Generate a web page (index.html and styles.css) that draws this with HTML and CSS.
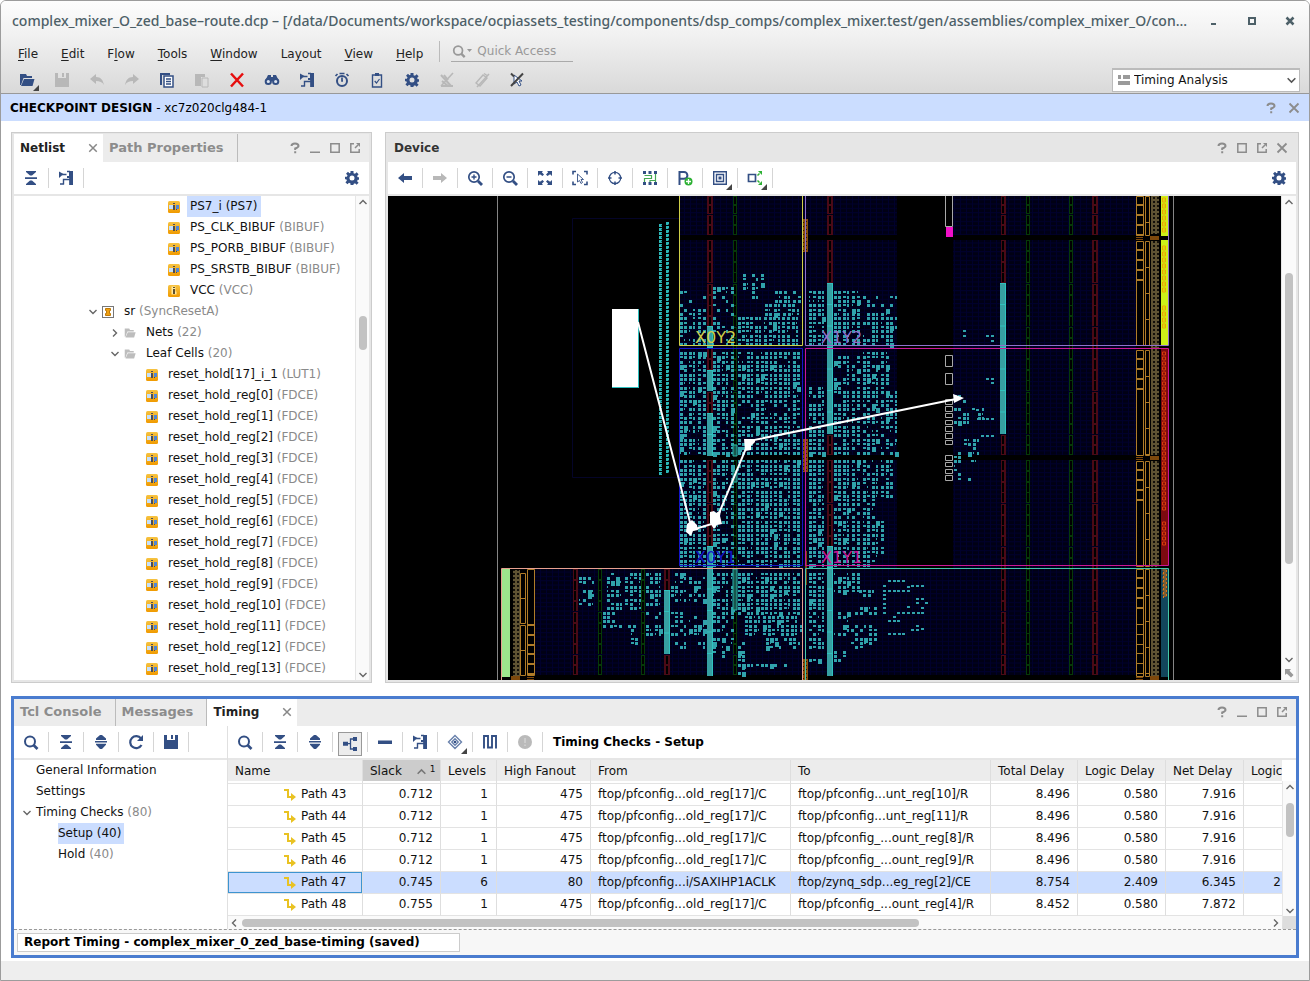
FILE: index.html
```html
<!DOCTYPE html>
<html lang="en">
<head>
<meta charset="utf-8">
<title>complex_mixer_0_zed_base-route.dcp</title>
<link rel="stylesheet" href="styles.css">
</head>
<body>
<svg class="defs" aria-hidden="true">
  <defs>
    <symbol id="search" viewBox="0 0 16 16"><circle cx="7" cy="7.500" r="5" fill="none" stroke="currentColor" stroke-width="2"/><path d="M10.500 11l4 4" stroke="currentColor" stroke-width="2.600"/></symbol>
    <symbol id="collapse" viewBox="0 0 16 16"><path d="M3 1h10v1L9 5.500H7L3 2zM2 7.200h12v1.800H2zM7 10.500h2l4 3.500v1H3v-1z" fill="currentColor"/></symbol>
    <symbol id="expand" viewBox="0 0 16 16"><path d="M7 1h2l4 3.500V6H3V4.500zM2 7h12v1.500H2zM3 9.700h10v1L9 15H7L3 10.700z" fill="currentColor"/></symbol>
    <symbol id="goto" viewBox="0 0 16 16"><path d="M1 1.500L5.500 4 1 8z" fill="currentColor"/><path d="M4 4.500h4.500M12 1v14M9 1.500h3M5.500 14.500V9.500H12M2 14h4" fill="none" stroke="currentColor" stroke-width="1.400"/><path d="M11 1h4v14h-3.500V8H9V6h2z" fill="currentColor"/></symbol>
    <symbol id="gear" viewBox="0 0 16 16"><path d="M6.500 1h3v2.200l1.500.6 1.600-1.500 2 2L13.100 6l.6 1.300H15v2.400h-1.300l-.6 1.500 1.500 1.500-2 2-1.600-1.400-1.500.6V15h-3v-1.600l-1.500-.6-1.600 1.400-2-2 1.500-1.500-.6-1.500H1V6.800h1.900L3.500 5.300 2 3.800l2-2 1.500 1.500 1-.5zM8 5.500A2.500 2.500 0 108 10.500 2.500 2.500 0 108 5.500z" fill="currentColor" fill-rule="evenodd"/></symbol>
    <symbol id="folder" viewBox="0 0 16 16"><path d="M1 13V2h6l1 2h5v2H4.500L2 13z" fill="currentColor"/><path d="M5 7h10.500L13.500 14H2z" fill="currentColor"/></symbol>
    <symbol id="floppy" viewBox="0 0 16 16"><path d="M1 1h3v5h8V1h3v14H1zM8 1h2v4H8z" fill="currentColor"/></symbol>
    <symbol id="undo" viewBox="0 0 16 16"><path d="M1 7l6-5v3c5 0 7 3 8 8-2-3-4-4-8-4v3z" fill="currentColor"/></symbol>
    <symbol id="redo" viewBox="0 0 16 16"><path d="M15 7L9 2v3c-5 0-7 3-8 8 2-3 4-4 8-4v3z" fill="currentColor"/></symbol>
    <symbol id="copy" viewBox="0 0 16 16"><path d="M1 1h10v2H3v10H1z" fill="currentColor"/><path d="M5 4h9v11H5zM7 7h5M7 9.500h5M7 12h5" fill="#fff" stroke="currentColor" stroke-width="1.500"/></symbol>
    <symbol id="paste" viewBox="0 0 16 16"><path d="M1 2h10v3H7v9H1z" fill="currentColor"/><path d="M8 6h6v9H8z" fill="#ddd" stroke="currentColor"/></symbol>
    <symbol id="cross" viewBox="0 0 16 16"><path d="M2 1.500l12 13M14 1.500l-12 13" stroke="currentColor" stroke-width="2.500"/></symbol>
    <symbol id="binoc" viewBox="0 0 16 16"><path d="M4 3h3v2h2V3h3l3 6H1z" fill="currentColor"/><g fill="#dce4f0" stroke="currentColor" stroke-width="2"><circle cx="4.300" cy="9.500" r="2.600"/><circle cx="11.700" cy="9.500" r="2.600"/></g></symbol>
    <symbol id="clock" viewBox="0 0 16 16"><circle cx="8" cy="9" r="5" fill="none" stroke="currentColor" stroke-width="2"/><path d="M8 5.500V9h1M5.500 1.500h5M1.500 4l2-2M14.500 4l-2-2" stroke="currentColor" stroke-width="1.700" fill="none"/></symbol>
    <symbol id="clip" viewBox="0 0 16 16"><path d="M3.500 3h9v12h-9z" fill="none" stroke="currentColor" stroke-width="1.400"/><path d="M6 1h4v3H6z" fill="currentColor"/><path d="M5.700 9l1.800 2 3-4" fill="none" stroke="currentColor" stroke-width="1.200"/></symbol>
    <symbol id="nomark" viewBox="0 0 16 16"><path d="M2 3l10 11M2 14h12M5 3l4 5M3 9l6 5" stroke="currentColor" stroke-width="2"/><path d="M14 1L2 14" stroke="currentColor" stroke-width="1.600"/></symbol>
    <symbol id="erase" viewBox="0 0 16 16"><path d="M2 11L9 3l4 3-7 8zM10 1.500l3 2" fill="none" stroke="currentColor" stroke-width="1.400"/><path d="M15 2L3 15" stroke="currentColor" stroke-width="1.500"/></symbol>
    <symbol id="noselect" viewBox="0 0 16 16"><path d="M5 3v9l3-2 2 4 2-1-2-4h3z" fill="#fff" stroke="#334f84"/><path d="M2 1.500l3 3M14 1.500L2 14" stroke="currentColor" stroke-width="2"/></symbol>
    <symbol id="left" viewBox="0 0 16 16"><path d="M1 8l6-5v3h8v4H7v3z" fill="currentColor"/></symbol>
    <symbol id="right" viewBox="0 0 16 16"><path d="M15 8L9 3v3H1v4h8v3z" fill="currentColor"/></symbol>
    <symbol id="zoomin" viewBox="0 0 16 16"><circle cx="7" cy="7" r="5.200" fill="none" stroke="currentColor" stroke-width="1.700"/><path d="M11 11l4 4" stroke="currentColor" stroke-width="2.800"/><path d="M4.500 7h5M7 4.500v5" stroke="currentColor" stroke-width="1.400"/></symbol>
    <symbol id="zoomout" viewBox="0 0 16 16"><circle cx="7" cy="7" r="5.200" fill="none" stroke="currentColor" stroke-width="1.700"/><path d="M11 11l4 4" stroke="currentColor" stroke-width="2.800"/><path d="M4.500 7h5" stroke="currentColor" stroke-width="1.400"/></symbol>
    <symbol id="fit" viewBox="0 0 16 16"><path d="M1 1h5L4.800 2.300 7 4.500 5.500 6 2.900 4.200 1 6zM15 1v5l-1.900-1.800L10.500 6 9 4.500l2.200-2.200L10 1zM1 15v-5l1.900 1.800L5.500 10 7 11.500l-2.200 2.200L6 15zM15 15h-5l1.200-1.300L9 11.500l1.500-1.500 2.600 1.800L15 10z" fill="currentColor"/></symbol>
    <symbol id="fitsel" viewBox="0 0 16 16"><path d="M1 4.500V1.500h3M12 1.500h3v3M1 11.500v3h3M12 14.500h3v-3" fill="none" stroke="currentColor" stroke-width="1.600"/><path d="M5.500 4v8l2-1.500 1.500 3 1.500-1-1.500-3h2.500z" fill="none" stroke="currentColor" stroke-width=".9"/></symbol>
    <symbol id="target" viewBox="0 0 16 16"><circle cx="8" cy="8" r="5.700" fill="none" stroke="currentColor" stroke-width="1.200"/><path d="M8 1v3.500M8 11.500v3.500M1 8h3.500M11.500 8h3.500" stroke="currentColor" stroke-width="1.600"/></symbol>
    <symbol id="routing" viewBox="0 0 16 16"><path d="M1 1h3v3H1zM6.500 1h3v3h-3zM12 1h3v3h-3zM1 12h3v3H1zM6.500 12h3v3h-3zM12 12h3v3h-3z" fill="#334f84"/><path d="M2.500 5.500h7v3h-7v3.500M13.500 4v8M8 12v-1.500h5" fill="none" stroke="#45a853" stroke-width="1.200"/></symbol>
    <symbol id="pblock" viewBox="0 0 16 16"><path d="M2.500 15V2h4.500a3.200 3.200 0 010 6.800H3" fill="none" stroke="#334f84" stroke-width="2"/><circle cx="11.500" cy="11.500" r="4" fill="#2eb135"/><path d="M9 11.500h5M11.500 9v5" stroke="#fff" stroke-width="1.300"/></symbol>
    <symbol id="layers" viewBox="0 0 16 16"><path d="M1.700 1.700h12.600v12.600H1.700zM4.500 4.500h7v7h-7z" fill="none" stroke="currentColor" stroke-width="1.400"/><path d="M6.500 6.500h3v3h-3z" fill="currentColor"/></symbol>
    <symbol id="fanout" viewBox="0 0 16 16"><path d="M1.500 4.500h7v7h-7z" fill="none" stroke="#334f84" stroke-width="1.700"/><path d="M10.500 5.500l2-2M10.500 10.500l2 2" fill="none" stroke="#2eb135" stroke-width="1.500"/><path d="M11 1h4v4zM11 15h4v-4z" fill="#2eb135"/></symbol>
    <symbol id="reload" viewBox="0 0 16 16"><path d="M13 4.500A6 6 0 1013.500 11" fill="none" stroke="currentColor" stroke-width="2.200"/><path d="M15 1v6H9z" fill="currentColor"/></symbol>
    <symbol id="hier" viewBox="0 0 16 16"><path d="M1 5.700h5v4H1zM11 1h4v4h-4zM11 11h4v4h-4z" fill="currentColor"/><path d="M6 7.700h2.500M11 3H8.500v10H11" fill="none" stroke="currentColor" stroke-width="1.300"/></symbol>
    <symbol id="minus" viewBox="0 0 16 16"><path d="M1 6.500h14v3.500H1z" fill="currentColor"/></symbol>
    <symbol id="diamond" viewBox="0 0 16 16"><path d="M8 1.500L14.500 8 8 14.500 1.500 8zM8 4.800L11.200 8 8 11.200 4.800 8z" fill="none" stroke="#6880ab" stroke-width="1.400"/><circle cx="8" cy="8" r="1.300" fill="#334f84"/></symbol>
    <symbol id="wave" viewBox="0 0 16 16"><path d="M2 14.500V2h4v11.500h4V2h4v12.500" fill="none" stroke="currentColor" stroke-width="1.900"/></symbol>
    <symbol id="info" viewBox="0 0 16 16"><circle cx="8" cy="8" r="7" fill="#bababa"/><path d="M8 4v5M8 10.500v1.500" stroke="#d0d0d0" stroke-width="1.700"/></symbol>
    <symbol id="help" viewBox="0 0 12 12"><path d="M2.500 4Q2.500 1.500 6 1.500T9.500 4Q9.500 5.200 6.200 6.500V8M6.200 9.300v2" fill="none" stroke="currentColor" stroke-width="2"/></symbol>
    <symbol id="min" viewBox="0 0 12 12"><path d="M1 9.500h10v1.500H1z" fill="currentColor"/></symbol>
    <symbol id="max" viewBox="0 0 12 12"><path d="M1.800 1.800h8.400v8.400H1.800z" fill="none" stroke="currentColor" stroke-width="1.500"/></symbol>
    <symbol id="float" viewBox="0 0 12 12"><path d="M5 1.800H1.800v8.400h8.400V7M6 6l3-3" fill="none" stroke="currentColor" stroke-width="1.500"/><path d="M7 1h4v4z" fill="currentColor"/></symbol>
    <symbol id="close" viewBox="0 0 12 12"><path d="M1.500 1.500l9 9M10.500 1.500l-9 9" stroke="currentColor" stroke-width="1.800"/></symbol>
    <symbol id="up" viewBox="0 0 10 10"><path d="M1.500 7L5 3.500 8.500 7" fill="none" stroke="currentColor" stroke-width="1.400"/></symbol>
    <symbol id="down" viewBox="0 0 10 10"><path d="M1.500 3L5 6.500 8.500 3" fill="none" stroke="currentColor" stroke-width="1.400"/></symbol>
    <symbol id="prev" viewBox="0 0 10 10"><path d="M7 1.500L3.500 5 7 8.500" fill="none" stroke="currentColor" stroke-width="1.400"/></symbol>
    <symbol id="next" viewBox="0 0 10 10"><path d="M3 1.500L6.500 5 3 8.500" fill="none" stroke="currentColor" stroke-width="1.400"/></symbol>
    <linearGradient id="gold" x2="0" y2="1"><stop offset="0" stop-color="#f6c342"/><stop offset="1" stop-color="#f09a00"/></linearGradient>
    <symbol id="cell" viewBox="0 0 12 12"><rect width="12" height="12" rx="1.500" fill="url(#gold)"/><path d="M1 4h4v4H1z" fill="#c4e0fc"/><path d="M8 4h3v4H8z" fill="#4f86d6"/><path d="M5 4h2v5H5zM5 2h2v1H5zM8 8h1v1H8z" fill="#4a4c58"/></symbol>
    <symbol id="cellv" viewBox="0 0 12 12"><rect width="12" height="12" rx="1.500" fill="url(#gold)"/><path d="M3.500 1.500h4v5h1v3h-5z" fill="#ffe9a0"/><path d="M5 4h2v5H5zM5 2h2v1H5z" fill="#5c5030"/></symbol>
    <symbol id="inst" viewBox="0 0 12 12"><rect x=".5" y=".5" width="11" height="11" fill="#fff" stroke="#777"/><path d="M3.500 2.500h5v2h-1v3h1v2h-5v-2h1v-3h-1z" fill="#f0a010" stroke="#c07a08"/></symbol>
    <symbol id="path" viewBox="0 0 13 13"><path d="M1 2h4v7h6" fill="none" stroke="#e9c222" stroke-width="2"/><path d="M8 5l5 4-5 4z" fill="#e9c222"/></symbol>
    <symbol id="layout" viewBox="0 0 12 12"><path d="M0 1h3v4H0zM5 1h7v4H5zM0 7h12v4H0z" fill="#9a9a9a"/></symbol>
  </defs>
</svg>
<div class="window">
  <header class="chrome">
    <div class="titlebar">
      <h1>complex_mixer_O_zed_base–route.dcp – [/data/Documents/workspace/ocpiassets_testing/components/dsp_comps/complex_mixer.test/gen/assemblies/complex_mixer_O/con...</h1>
      <div class="winbtns">
        <button aria-label="Minimize"><svg viewBox="0 0 10 10"><path d="M2 7h5v2H2z" fill="currentColor"/></svg></button>
        <button aria-label="Maximize"><svg viewBox="0 0 10 10"><path d="M2 2h6v6H2z" fill="none" stroke="currentColor" stroke-width="2"/></svg></button>
        <button aria-label="Close window"><svg viewBox="0 0 10 10"><path d="M1.500 1.500l7 7M8.500 1.500l-7 7" stroke="currentColor" stroke-width="2.500"/></svg></button>
      </div>
    </div>
    <nav class="menubar">
      <button><u>F</u>ile</button><button><u>E</u>dit</button><button>F<u>l</u>ow</button><button><u>T</u>ools</button><button><u>W</u>indow</button><button>La<u>y</u>out</button><button><u>V</u>iew</button><button><u>H</u>elp</button>
      <label class="quick"><svg class="i16"><use href="#search"/></svg><svg class="caret" viewBox="0 0 6 4"><path d="M0 0h5L2.500 3z" fill="currentColor"/></svg><input type="text" placeholder="Quick Access" aria-label="Quick Access"></label>
    </nav>
    <div class="maintools">
      <div class="tools">
        <button class="more" aria-label="Open"><svg><use href="#folder"/></svg></button>
        <button class="off" aria-label="Save"><svg><use href="#floppy"/></svg></button>
        <button class="off" aria-label="Undo"><svg><use href="#undo"/></svg></button>
        <button class="off" aria-label="Redo"><svg><use href="#redo"/></svg></button>
        <button aria-label="Copy"><svg><use href="#copy"/></svg></button>
        <button class="off" aria-label="Paste"><svg><use href="#paste"/></svg></button>
        <button class="red" aria-label="Delete"><svg><use href="#cross"/></svg></button>
        <button aria-label="Find"><svg><use href="#binoc"/></svg></button>
        <button aria-label="Go to"><svg><use href="#goto"/></svg></button>
        <button aria-label="Timing"><svg><use href="#clock"/></svg></button>
        <button aria-label="Report"><svg><use href="#clip"/></svg></button>
        <button aria-label="Settings"><svg><use href="#gear"/></svg></button>
        <button class="off" aria-label="Unmark"><svg><use href="#nomark"/></svg></button>
        <button class="off" aria-label="Unhighlight"><svg><use href="#erase"/></svg></button>
        <button class="dark" aria-label="Unselect"><svg><use href="#noselect"/></svg></button>
      </div>
      <label class="layoutsel"><svg><use href="#layout"/></svg><select aria-label="Layout"><option>Timing Analysis</option></select><svg class="arr"><use href="#down"/></svg></label>
    </div>
  </header>
  <div class="design"><strong>CHECKPOINT DESIGN</strong><span>- xc7z020clg484-1</span>
    <div class="ctl"><button aria-label="Help"><svg><use href="#help"/></svg></button><button aria-label="Close"><svg><use href="#close"/></svg></button></div>
  </div>
  <main>
    <div class="top">
      <section class="panel netlist">
        <div class="tabs">
          <div class="tab on"><span>Netlist</span><button aria-label="Close tab"><svg><use href="#close"/></svg></button></div>
          <div class="tab"><span>Path Properties</span></div>
          <div class="ctl"><button aria-label="Help"><svg><use href="#help"/></svg></button><button aria-label="Minimize"><svg><use href="#min"/></svg></button><button aria-label="Maximize"><svg><use href="#max"/></svg></button><button aria-label="Float"><svg><use href="#float"/></svg></button></div>
        </div>
        <div class="tools">
          <button aria-label="Collapse All"><svg><use href="#collapse"/></svg></button><button aria-label="Go to"><svg><use href="#goto"/></svg></button><button class="end" aria-label="Settings"><svg><use href="#gear"/></svg></button>
        </div>
        <div class="scroller">
          <ul class="tree">
            <li class="l4"><i></i><svg><use href="#cell"/></svg><span class="sel">PS7_i (PS7)</span></li>
            <li class="l4"><i></i><svg><use href="#cell"/></svg><span>PS_CLK_BIBUF <em>(BIBUF)</em></span></li>
            <li class="l4"><i></i><svg><use href="#cell"/></svg><span>PS_PORB_BIBUF <em>(BIBUF)</em></span></li>
            <li class="l4"><i></i><svg><use href="#cell"/></svg><span>PS_SRSTB_BIBUF <em>(BIBUF)</em></span></li>
            <li class="l4"><i></i><svg><use href="#cellv"/></svg><span>VCC <em>(VCC)</em></span></li>
            <li class="l1"><i><svg><use href="#down"/></svg></i><svg><use href="#inst"/></svg><span>sr <em>(SyncResetA)</em></span></li>
            <li class="l2"><i><svg><use href="#next"/></svg></i><svg class="fold"><use href="#folder"/></svg><span>Nets <em>(22)</em></span></li>
            <li class="l2"><i><svg><use href="#down"/></svg></i><svg class="fold"><use href="#folder"/></svg><span>Leaf Cells <em>(20)</em></span></li>
            <li class="l3"><i></i><svg><use href="#cell"/></svg><span>reset_hold[17]_i_1 <em>(LUT1)</em></span></li>
            <li class="l3"><i></i><svg><use href="#cell"/></svg><span>reset_hold_reg[0] <em>(FDCE)</em></span></li>
            <li class="l3"><i></i><svg><use href="#cell"/></svg><span>reset_hold_reg[1] <em>(FDCE)</em></span></li>
            <li class="l3"><i></i><svg><use href="#cell"/></svg><span>reset_hold_reg[2] <em>(FDCE)</em></span></li>
            <li class="l3"><i></i><svg><use href="#cell"/></svg><span>reset_hold_reg[3] <em>(FDCE)</em></span></li>
            <li class="l3"><i></i><svg><use href="#cell"/></svg><span>reset_hold_reg[4] <em>(FDCE)</em></span></li>
            <li class="l3"><i></i><svg><use href="#cell"/></svg><span>reset_hold_reg[5] <em>(FDCE)</em></span></li>
            <li class="l3"><i></i><svg><use href="#cell"/></svg><span>reset_hold_reg[6] <em>(FDCE)</em></span></li>
            <li class="l3"><i></i><svg><use href="#cell"/></svg><span>reset_hold_reg[7] <em>(FDCE)</em></span></li>
            <li class="l3"><i></i><svg><use href="#cell"/></svg><span>reset_hold_reg[8] <em>(FDCE)</em></span></li>
            <li class="l3"><i></i><svg><use href="#cell"/></svg><span>reset_hold_reg[9] <em>(FDCE)</em></span></li>
            <li class="l3"><i></i><svg><use href="#cell"/></svg><span>reset_hold_reg[10] <em>(FDCE)</em></span></li>
            <li class="l3"><i></i><svg><use href="#cell"/></svg><span>reset_hold_reg[11] <em>(FDCE)</em></span></li>
            <li class="l3"><i></i><svg><use href="#cell"/></svg><span>reset_hold_reg[12] <em>(FDCE)</em></span></li>
            <li class="l3"><i></i><svg><use href="#cell"/></svg><span>reset_hold_reg[13] <em>(FDCE)</em></span></li>
          </ul>
          <div class="vbar nbar"><svg><use href="#up"/></svg><b></b><svg><use href="#down"/></svg></div>
        </div>
      </section>
      <section class="panel device">
        <div class="tabs devhead"><h2>Device</h2>
          <div class="ctl"><button aria-label="Help"><svg><use href="#help"/></svg></button><button aria-label="Maximize"><svg><use href="#max"/></svg></button><button aria-label="Float"><svg><use href="#float"/></svg></button><button aria-label="Close"><svg><use href="#close"/></svg></button></div>
        </div>
        <div class="tools">
          <button aria-label="Previous"><svg><use href="#left"/></svg></button><button class="off" aria-label="Next"><svg><use href="#right"/></svg></button><button aria-label="Zoom In"><svg><use href="#zoomin"/></svg></button><button aria-label="Zoom Out"><svg><use href="#zoomout"/></svg></button><button aria-label="Zoom Fit"><svg><use href="#fit"/></svg></button><button aria-label="Fit Selection"><svg><use href="#fitsel"/></svg></button><button aria-label="Autofit"><svg><use href="#target"/></svg></button><button aria-label="Routing Resources"><svg><use href="#routing"/></svg></button><button aria-label="Draw Pblock"><svg><use href="#pblock"/></svg></button><button class="more" aria-label="Layers"><svg><use href="#layers"/></svg></button><button class="more" aria-label="Cell Connections"><svg><use href="#fanout"/></svg></button><button class="end" aria-label="Settings"><svg><use href="#gear"/></svg></button>
        </div>
        <div class="scroller">
          <svg class="chip" viewBox="388 196 893 484" preserveAspectRatio="xMidYMin slice" role="img" aria-label="Device floorplan">
            <defs><pattern id="grid" width="6" height="4.330" patternUnits="userSpaceOnUse"><rect width="6" height="4.330" fill="#000014"/><path d="M0 .5h6M.5 0v4.330" stroke="#00002c"/></pattern>
            <pattern id="pads" width="4" height="4" patternUnits="userSpaceOnUse"><rect width="4" height="4" fill="#5f5333"/><path d="M1 1h2v2H1z" fill="#14100a"/></pattern>
            <pattern id="pins" width="5" height="4" patternUnits="userSpaceOnUse"><rect width="5" height="4" fill="#8a4f0c"/><path d="M1 1h1v1H1zM3 2h1v1H3z" fill="#2a1500"/></pattern></defs>
            <rect x="388" y="196" width="893" height="484" fill="#000"/>
            <path d="M679 196h218v39H679zM953 196h183v39H953zM679 240h218v215H679zM953 240h183v215H953zM679 460h218v108H679zM953 460h183v108H953zM535 568h601v107H535z" fill="url(#grid)"/>
            <path d="M679 218.500H572.500V477.500H679" fill="none" stroke="#040428"/>
            <g id="fabric"></g>
            <g fill="none">
              <path d="M497.500 196v484M1173.500 196v484" stroke="#858585"/>
              <path d="M679.500 196v149.500h123V196" stroke="#d0d048"/>
              <path d="M805.500 196v149.500h363V196" stroke="#9070cc"/>
              <path d="M679.500 566V348.500h123v217h-123" stroke="#1515c8"/>
              <path d="M805.500 348.500h363v217h-363z" stroke="#cc1596"/>
              <path d="M501.500 680V568.500h301V680" stroke="#e8a090"/>
              <path d="M805.500 680V568.500h363V680" stroke="#45c8a8"/>
              <path d="M945.500 196v30.500h7V196M945.500 355.500h7v11h-7zM945.500 373.500h7v11h-7zM945.500 399.500h7v5h-7zM945.500 406.500h7v5h-7zM945.500 413.500h7v4h-7zM945.500 420.500h7v4h-7zM945.500 426.500h7v5h-7zM945.500 433.500h7v5h-7zM945.500 440.500h7v4h-7zM945.500 455.500h7v5h-7zM945.500 462.500h7v4h-7zM945.500 469.500h7v4h-7zM945.500 475.500h7v5h-7z" stroke="#a8a8a8"/>
            </g>
            <path d="M946 227h7v10h-7z" fill="#f010c8"/>
            <g class="region"><text x="695" y="343" fill="#d0d048">X0Y2</text><text x="821" y="343" fill="#9070cc">X1Y2</text><text x="695" y="563" fill="#1515c8">X0Y1</text><text x="821" y="563" fill="#cc1596">X1Y1</text></g>
            <path d="M612 309h27v79h-27z" fill="#2ec0c0"/><path d="M612 309h26v78h-26z" fill="#fff"/>
            <path d="M638 322l54 208 23-7 34-82 212-43" fill="none" stroke="#fff" stroke-width="2"/>
            <path d="M687 524l5-4 5 5 1 5-5 1-2 5-5-4zM710 512l4-1 2 2 5-3-1 6 2 8-5 1-3 4-4-6zM744 439h11v3l-4 4v4l-6 1zM953 394l11 4-10 5z" fill="#fff"/>
          </svg>
          <div class="vbar dbar"><svg><use href="#up"/></svg><b></b><svg><use href="#down"/></svg><svg class="corner" viewBox="0 0 10 10"><path d="M1 1h6L5.500 2.700 9.500 7 7 9.500 2.700 5.500 1 7z" fill="#999"/></svg></div>
        </div>
      </section>
    </div>
    <section class="panel timing">
      <div class="tabs">
        <div class="tab"><span>Tcl Console</span></div><div class="tab"><span>Messages</span></div><div class="tab on"><span>Timing</span><button aria-label="Close tab"><svg><use href="#close"/></svg></button></div>
        <div class="ctl"><button aria-label="Help"><svg><use href="#help"/></svg></button><button aria-label="Minimize"><svg><use href="#min"/></svg></button><button aria-label="Maximize"><svg><use href="#max"/></svg></button><button aria-label="Float"><svg><use href="#float"/></svg></button></div>
      </div>
      <div class="split">
        <div class="reports">
          <div class="tools"><button aria-label="Search"><svg><use href="#search"/></svg></button><button aria-label="Collapse All"><svg><use href="#collapse"/></svg></button><button aria-label="Expand All"><svg><use href="#expand"/></svg></button><button aria-label="Rerun"><svg><use href="#reload"/></svg></button><button aria-label="Save"><svg><use href="#floppy"/></svg></button></div>
          <ul class="tree rep">
            <li><i></i><span>General Information</span></li>
            <li><i></i><span>Settings</span></li>
            <li><i><svg><use href="#down"/></svg></i><span>Timing Checks <em>(80)</em></span></li>
            <li class="sub"><i></i><span class="sel">Setup (40)</span></li>
            <li class="sub"><i></i><span>Hold <em>(40)</em></span></li>
          </ul>
        </div>
        <div class="results">
          <div class="tools"><button aria-label="Search"><svg><use href="#search"/></svg></button><button aria-label="Collapse All"><svg><use href="#collapse"/></svg></button><button aria-label="Expand All"><svg><use href="#expand"/></svg></button><button class="pressed" aria-label="Group by hierarchy"><svg><use href="#hier"/></svg></button><button aria-label="Flatten"><svg><use href="#minus"/></svg></button><button aria-label="Go to"><svg><use href="#goto"/></svg></button><button class="more" aria-label="Mark"><svg><use href="#diamond"/></svg></button><button aria-label="Waveform"><svg><use href="#wave"/></svg></button><button aria-label="Messages"><svg><use href="#info"/></svg></button><h3>Timing Checks - Setup</h3></div>
          <div class="gridwrap">
            <div class="tablebox">
              <table>
                <colgroup><col class="c1"><col class="c2"><col class="c3"><col class="c4"><col><col><col class="c7"><col class="c8"><col class="c9"><col class="c10"></colgroup>
                <thead><tr><th>Name</th><th class="sorted">Slack<svg><use href="#up"/></svg><sup>1</sup></th><th>Levels</th><th>High Fanout</th><th>From</th><th>To</th><th>Total Delay</th><th>Logic Delay</th><th>Net Delay</th><th>Logic</th></tr></thead>
                <tbody>
                  <tr><td><svg><use href="#path"/></svg>Path 43</td><td>0.712</td><td>1</td><td>475</td><td>ftop/pfconfig...old_reg[17]/C</td><td>ftop/pfconfig...unt_reg[10]/R</td><td>8.496</td><td>0.580</td><td>7.916</td><td></td></tr>
                  <tr><td><svg><use href="#path"/></svg>Path 44</td><td>0.712</td><td>1</td><td>475</td><td>ftop/pfconfig...old_reg[17]/C</td><td>ftop/pfconfig...unt_reg[11]/R</td><td>8.496</td><td>0.580</td><td>7.916</td><td></td></tr>
                  <tr><td><svg><use href="#path"/></svg>Path 45</td><td>0.712</td><td>1</td><td>475</td><td>ftop/pfconfig...old_reg[17]/C</td><td>ftop/pfconfig_...ount_reg[8]/R</td><td>8.496</td><td>0.580</td><td>7.916</td><td></td></tr>
                  <tr><td><svg><use href="#path"/></svg>Path 46</td><td>0.712</td><td>1</td><td>475</td><td>ftop/pfconfig...old_reg[17]/C</td><td>ftop/pfconfig_...ount_reg[9]/R</td><td>8.496</td><td>0.580</td><td>7.916</td><td></td></tr>
                  <tr class="cur"><td><svg><use href="#path"/></svg>Path 47</td><td>0.745</td><td>6</td><td>80</td><td>ftop/pfconfig...i/SAXIHP1ACLK</td><td>ftop/zynq_sdp...eg_reg[2]/CE</td><td>8.754</td><td>2.409</td><td>6.345</td><td>2</td></tr>
                  <tr><td><svg><use href="#path"/></svg>Path 48</td><td>0.755</td><td>1</td><td>475</td><td>ftop/pfconfig...old_reg[17]/C</td><td>ftop/pfconfig_...ount_reg[4]/R</td><td>8.452</td><td>0.580</td><td>7.872</td><td></td></tr>
                </tbody>
              </table>
              <div class="hbar"><svg><use href="#prev"/></svg><div><b></b></div><svg><use href="#next"/></svg></div>
            </div>
            <div class="vbar tbar"><svg><use href="#up"/></svg><b></b><svg><use href="#down"/></svg></div>
          </div>
        </div>
      </div>
      <div class="saved"><div>Report Timing - complex_mixer_0_zed_base-timing (saved)</div></div>
    </section>
  </main>
  <footer></footer>
</div>
<script src="device.js"></script>
</body>
</html>
```
FILE: styles.css
```css
* { box-sizing: border-box; }
body { margin: 0; font: 12px/16px "DejaVu Sans", sans-serif; color: #111; }
button { font: inherit; color: inherit; background: none; border: 0; padding: 0; }
h1, h2, h3, ul { margin: 0; padding: 0; font-size: 12px; }
em { font-style: normal; color: #8a8a8a; }
svg { display: block; flex: none; }
.defs { position: absolute; width: 0; height: 0; }
.window { display: flex; flex-direction: column; height: 100vh; border: 1px solid #9c9c9c; border-radius: 6px 6px 0 0; overflow: hidden; background: #fff; }

.chrome { background: linear-gradient(#fdfdfd, #f0f0f0 40%, #d9d9d9); border-bottom: 1px solid #999; }
.titlebar { display: flex; align-items: center; height: 39px; padding: 0 10px 0 11px; color: #4d6068; }
.titlebar h1 { flex: 1; min-width: 0; font: 500 14px/20px "Noto Sans", sans-serif; white-space: nowrap; overflow: hidden; }
.winbtns { display: flex; gap: 20px; }
.winbtns button { width: 18px; height: 18px; display: grid; place-items: center; }
.winbtns svg { width: 10px; height: 10px; }
.menubar { display: flex; align-items: center; gap: 23px; height: 27px; padding-left: 17px; color: #222; }
.menubar u { text-underline-offset: 2px; }
.quick { display: flex; align-items: center; gap: 1px; width: 122px; height: 20px; margin: 0 0 4px 5px; color: #999; border-bottom: 1px solid #aaa; position: relative; }
.quick::before { content: ""; position: absolute; left: -12px; top: -1px; height: 21px; border-left: 1px solid #bbb; }
.quick svg { width: 14px; height: 14px; margin-left: 1px; }
.quick .caret { width: 6px; height: 4px; margin: 0; }
.quick input { flex: 1; min-width: 0; font: inherit; border: 0; background: none; padding: 0 0 0 3px; outline: 0; }
.quick input::placeholder { color: #999; opacity: 1; }
.maintools { display: flex; justify-content: space-between; height: 26px; padding: 0 9px 0 8px; }
.layoutsel { display: flex; align-items: center; width: 188px; height: 24px; margin-top: 1px; background: #fff; border: 1px solid #bbb; border-top-width: 2px; padding: 0 2px 1px 5px; }
.layoutsel svg { width: 12px; height: 12px; }
.layoutsel select { flex: 1; font: inherit; color: #111; appearance: none; border: 0; background: none; padding: 0 4px; outline: 0; }
.layoutsel .arr { width: 11px; height: 11px; color: #555; }

.tools { display: flex; color: #334f84; }
.tools button { position: relative; width: 35px; display: grid; place-items: center; }
.tools button svg { width: 16px; height: 16px; }
.tools .off { color: #b8b8b8; }
.tools .red { color: #e60f0f; }
.tools .dark { color: #444; }
.tools .more::after { content: ""; position: absolute; right: 5px; bottom: -2px; border: 3px solid #444; border-top-color: transparent; border-left-color: transparent; }
.chrome .tools .more::after { bottom: 2px; }
.panel .tools { height: 34px; align-items: center; border-bottom: 2px solid #e6e6e6; background: #fff; flex: none; }
.panel .tools button { height: 20px; border-right: 1px solid #d5d5d5; }
.panel .tools .end { margin-left: auto; border: 0; }
.panel .tools .pressed svg { box-sizing: content-box; padding: 3px; border: 1px solid #999; background: #ececec; }
.tools h3 { margin-left: 10px; color: #000; }

.design { display: flex; align-items: center; gap: 4px; height: 27px; padding: 0 5px 0 9px; background: #cbddff; color: #000; }
.ctl { display: flex; margin-left: auto; padding-right: 4px; color: #8c8c8c; }
.ctl button { width: 20px; height: 20px; display: grid; place-items: center; }
.ctl svg { width: 12px; height: 12px; }
.design .ctl { padding: 0; gap: 3px; }

main { flex: 1; min-height: 0; display: flex; flex-direction: column; gap: 13px; padding: 11px 10px 3px; }
footer { height: 19px; background: #eee; }
.top { flex: 1; min-height: 0; display: flex; gap: 13px; }
.panel { display: flex; flex-direction: column; min-width: 0; border: 1px solid #ccc; }
.netlist, .device { box-shadow: inset 0 0 0 2px #e6e6e6; padding: 1px 2px 2px; }
.netlist { width: 361px; flex: none; }
.device { flex: 1; }
.tabs { display: flex; align-items: center; height: 28px; background: #ececec; flex: none; }
.tab { display: flex; align-items: center; align-self: stretch; padding: 0 13px 0 6px; font-weight: bold; font-size: 13px; color: #8c8c8c; border-right: 1px solid #bbb; }
.tab.on { font-size: 12px; color: #222; background: #fff; padding-right: 5px; border: 0; }
.tab button { margin-left: 23px; color: #888; }
.tab button svg { width: 10px; height: 10px; }
.devhead { background: #e6e6e6; padding-left: 6px; color: #333; }
.scroller { flex: 1; min-height: 0; display: flex; }
.tree { flex: 1; overflow: hidden; list-style: none; }
.tree li { display: flex; align-items: center; height: 21px; white-space: nowrap; }
.tree i { width: 14px; flex: none; }
.tree i svg { width: 10px; height: 10px; color: #666; }
.tree li > svg { width: 12px; height: 12px; margin-right: 7px; }
.tree .fold { color: #bdbdbd; }
.tree span { line-height: 20px; padding: 0 3px 1px; }
.l1 { padding-left: 74px; } .l2 { padding-left: 96px; } .l3 { padding-left: 118px; } .l4 { padding-left: 140px; }
.tree .sel { background: #cbddff; }
.vbar { width: 14px; flex: none; display: flex; flex-direction: column; align-items: center; background: #fafafa; border-left: 1px solid #e6e6e6; color: #666; }
.vbar svg { width: 10px; height: 10px; margin: 1px 0 2px; }
.vbar b { width: 8px; border-radius: 4px; background: #c2c2c2; }
.nbar b { margin-top: 107px; height: 34px; }
.nbar svg:last-child, .tbar svg:last-child { margin: auto 0 0; }
.dbar { width: 15px; }
.dbar b { margin-top: 64px; flex: 1; margin-bottom: 90px; }
.chip { flex: 1; width: 0; height: 100%; background: #000; }
.region { font: 16px "DejaVu Sans", sans-serif; }

.timing { height: 262px; flex: none; border: 3px solid #4a7ccf; }
.timing .tabs { height: 27px; }
.timing .tab { padding-bottom: 2px; }
.timing .ctl { padding-bottom: 1px; }
.split { flex: 1; min-height: 0; display: flex; }
.reports { width: 214px; border-right: 1px solid #e0e0e0; flex: none; }
.rep li { padding-left: 8px; }
.rep i { width: 11px; }
.rep .sub { padding-left: 33px; }
.rep .sub span { padding-left: 0; }
.results { flex: 1; min-width: 0; display: flex; flex-direction: column; }
.gridwrap { flex: 1; display: flex; min-height: 0; }
.tablebox { flex: 1; min-width: 0; }
table { width: 100%; table-layout: fixed; border-collapse: separate; border-spacing: 0; }
.c1 { width: 135px; } .c2 { width: 78px; } .c3 { width: 56px; } .c4 { width: 94px; }
.c7 { width: 87px; } .c8 { width: 88px; } .c9 { width: 78px; } .c10 { width: 38px; }
th, td { padding: 0 7px 2px; white-space: nowrap; overflow: hidden; border-right: 1px solid #dedede; border-bottom: 1px solid #e3e3e3; }
th { height: 24px; text-align: left; font-weight: normal; background: linear-gradient(#ececec 21px, #fff 21px); }
th.sorted { background: linear-gradient(#ccc 21px, #fff 21px); padding-right: 2px; }
th svg { display: inline-block; width: 11px; height: 11px; margin-left: 14px; vertical-align: -2px; color: #777; }
th sup { font-size: 9px; line-height: 0; margin-left: 3px; vertical-align: 3px; }
td { height: 22px; text-align: right; }
td:first-child { padding-left: 55px; text-align: left; }
td:first-child svg { display: inline-block; width: 13px; height: 13px; margin-right: 5px; vertical-align: -3px; }
td:nth-child(3) { padding-right: 8px; }
td:nth-child(5), td:nth-child(6) { text-align: left; }
th:last-child, td:last-child { border-right: 0; padding-right: 1px; text-overflow: clip; }
.cur td { background: #cbddff; }
.cur td:first-child { box-shadow: inset 0 0 0 1px #3d94d0; }
.hbar { display: flex; align-items: center; height: 13px; background: #fafafa; color: #666; padding: 0 1px; }
.hbar svg { width: 10px; height: 10px; }
.hbar div { flex: 1; padding: 0 3px; }
.hbar b { display: block; width: 66%; height: 8px; border-radius: 4px; background: #c2c2c2; }
.tbar { margin-top: 21px; border-bottom: 13px solid #ddd; }
.tbar b { height: 34px; margin-top: 9px; }
.saved { height: 26px; flex: none; border-top: 1px dashed #999; background: #f7f7f7; padding: 3px; }
.saved div { width: 443px; height: 19px; line-height: 17px; padding-left: 6px; background: #fff; border: 1px solid #ccc; font-weight: bold; color: #000; }
```
FILE: device.js
```javascript
const NS = 'http://www.w3.org/2000/svg';
const fabric = document.getElementById('fabric');
function add(d, fill, stroke) {
  const p = document.createElementNS(NS, 'path');
  p.setAttribute('d', d);
  p.setAttribute('fill', fill || 'none');
  if (stroke) p.setAttribute('stroke', stroke);
  fabric.appendChild(p);
}
const box = (x, y, w, h) => `M${x} ${y}h${w}v${h}h${-w}z`;
let seed = 7;
const rnd = () => (seed = (seed * 16807) % 2147483647) / 2147483647;

// Block RAM and DSP columns, split at clock row boundaries
const bands = [[196, 214], [215, 235], [240, 283], [284, 326], [327, 391], [392, 434], [435, 455], [460, 503], [504, 546], [547, 568], [569, 611], [612, 654], [655, 675]];
function column(x, w, color, top) {
  let outer = '', inner = '';
  for (const [a, b] of bands) {
    if (a < top) continue;
    outer += box(x, a, w, b - a);
    const n = Math.max(1, Math.round((b - a) / 10.800)), s = (b - a) / n;
    for (let i = 0; i < n; i++) inner += box(x + Math.floor(w / 2) - 1, Math.round(a + i * s + 1), 2, Math.round(s) - 2);
  }
  add(outer, color);
  add(inner, '#000');
}
[[707, 6], [827, 6], [1001, 5], [1092, 6]].forEach(([x, w]) => column(x, w, '#4a0a16', 0));
[[573, 5], [664, 6]].forEach(([x, w]) => column(x, w, '#4a0a16', 569));
[733, 1026, 1069].forEach(x => column(x, 4, '#063a08', 0));
[598, 641].forEach(x => column(x, 4, '#063a08', 569));

// Placed slices: x0, x1, y0, y1, density
const zones = [
  [679, 706, 290, 308, .3], [679, 706, 308, 345, .75], [712, 732, 283, 296, .7], [712, 732, 296, 345, .4],
  [742, 764, 274, 297, .55], [774, 801, 287, 300, .95], [764, 801, 300, 317, .85], [745, 801, 317, 345, .93], [737, 746, 313, 345, .75],
  [679, 706, 349, 388, .9], [679, 706, 388, 455, .84], [712, 732, 349, 410, .92], [712, 732, 410, 455, .75],
  [737, 801, 349, 398, .94], [737, 801, 398, 424, .68], [737, 801, 424, 455, .94],
  [679, 706, 460, 566, .95], [712, 732, 460, 566, .8], [737, 801, 460, 548, .96], [737, 801, 548, 566, .75],
  [578, 595, 574, 606, .5], [606, 640, 569, 608, .78], [602, 614, 611, 625, .6], [609, 636, 624, 626, .9], [630, 640, 628, 643, .6],
  [645, 663, 569, 606, .7], [645, 663, 610, 618, .4], [645, 663, 624, 634, .65],
  [670, 706, 569, 602, .55], [670, 706, 611, 634, .65], [670, 706, 639, 650, .5], [712, 732, 569, 620, .85], [712, 732, 620, 656, .55],
  [737, 801, 569, 612, .92], [744, 801, 612, 634, .8], [765, 801, 634, 647, .7], [737, 801, 662, 665, .8], [737, 744, 640, 673, .75],
  [808, 826, 287, 345, .93], [833, 862, 287, 345, .9], [862, 896, 295, 310, .2], [862, 896, 310, 327, .65], [862, 892, 329, 345, .7],
  [862, 890, 348, 396, .85], [833, 862, 356, 396, .75], [808, 826, 386, 455, .84], [833, 862, 396, 455, .8], [862, 896, 390, 455, .75],
  [808, 826, 460, 566, .93], [833, 862, 460, 566, .9], [862, 892, 460, 498, .78], [862, 876, 498, 520, .75], [862, 883, 520, 556, .85], [862, 876, 556, 566, .8],
  [808, 826, 569, 648, .87], [808, 826, 659, 662, .8], [833, 858, 569, 592, .9], [858, 874, 588, 596, .7],
  [833, 850, 604, 634, .4], [850, 878, 604, 616, .55], [850, 878, 624, 648, .5], [833, 846, 650, 662, .6],
  [953, 964, 391, 403, .6], [953, 970, 404, 424, .7], [968, 984, 404, 420, .5], [963, 982, 437, 452, .6], [953, 961, 446, 480, .5], [970, 980, 460, 462, .9], [963, 970, 477, 480, .9]
];
let cells = '';
for (const [x0, x1, y0, y1, p] of zones) {
  for (let r = Math.ceil((y0 - 274) / 4.330); 274 + r * 4.330 < y1; r++) {
    const y = Math.round(274 + r * 4.330);
    for (let x = x0 + .5, i = 0; x < x1 - 1; x += 4.600, i++) {
      if (rnd() > p) continue;
      const k = rnd();
      cells += box(Math.round(x), y, k < .08 ? 1 : k > .95 ? 4 : i % 4 === 3 ? 2 : 3, k > .95 ? 5 : k < .3 ? 2 : 3);
    }
  }
}
const singles = [[888, 580], [893, 580], [897, 580], [902, 580], [907, 586], [911, 585], [916, 585], [921, 585], [883, 585], [883, 590], [888, 590], [893, 590], [897, 590], [902, 590], [907, 590], [883, 594], [883, 598], [883, 603], [883, 607], [883, 612], [897, 612], [902, 612], [907, 612], [912, 612], [917, 612], [921, 612], [893, 616], [888, 620], [893, 620], [897, 620], [916, 598], [921, 598], [916, 602], [925, 602], [907, 606], [921, 607], [916, 625], [911, 629], [916, 629], [921, 628], [888, 633], [893, 633], [898, 633], [902, 633], [963, 330], [963, 335], [986, 335], [991, 335], [991, 340], [986, 378], [991, 378], [991, 382], [977, 418], [982, 418], [986, 418], [991, 418], [981, 435], [986, 435], [991, 435], [972, 408], [976, 409]];
for (const [x, y] of singles) cells += box(x, y, 3, 2);
add(cells, '#30a3ab');

// Used block RAM
[[707, 326, 22], [707, 370, 21], [707, 413, 43], [707, 546, 130], [827, 283, 151], [827, 546, 130], [1000, 283, 151], [664, 590, 64]].forEach(([x, y, h]) => {
  add(box(x, y, 6, h), '#369fa2');
  add(`M${x} ${y + .5}h6M${x + 5.500} ${y}v${h}` + Array.from({ length: Math.floor(h / 22) }, (_, i) => `M${x} ${y + 21.500 * (i + 1)}h6`).join(''), null, '#30c2bf');
});
add(box(733, 445, 4, 11) + box(733, 471, 4, 11) + box(733, 569, 4, 41), '#18554c', '#28b5a8');

// Processor interface pins
let pins = '', notch = '';
for (let y = 224; y < 474; y += 4) { pins += box(659, y, 3, 3) + box(666, y - 2, 3, 3); notch += box(661, y + 1, 1, 1) + box(668, y, 1, 1); }
add(pins, '#2cb8b8');
add(notch, '#0b5c66');

// I/O banks
add(box(1161, 196, 7, 40) + box(1161, 240, 7, 106), '#cdf018');
add(box(1161, 349, 7, 217), '#7c0a10');
add(box(1161, 569, 7, 108), '#12465c');
add(box(502, 569, 8, 108), '#9de68c');
let a = '', b = '';
for (let y = 198; y < 326; y += 6) if ((y < 230 || y > 240) && (y < 290 || y > 300)) a += `M1162.500 ${y}v4h3v-4zM1165.500 ${y + 2}h-2`;
for (let y = 352; y < 546; y += 5) if (y < 510 || y > 520) b += `M1162.500 ${y}v3h3v-3z`;
add(a, null, '#efa800');
add(b, null, '#d93c08');
let c = '';
for (let y = 570; y < 597; y += 4) c += `M1162.500 ${y}h4v2h-3v2`;
add(c, null, '#e8760c');
add([[196, 234], [241, 455], [461, 567], [568, 677]].map(([p, q]) => box(1151, p, 8, q - p)).join('') + box(513, 570, 7, 107), 'url(#pads)');
add(box(803, 219, 5, 33) + box(803, 439, 5, 33) + box(803, 659, 5, 21), 'url(#pins)');
add(box(1150, 236, 9, 4) + box(1150, 456, 9, 4) + box(1150, 676, 9, 4) + box(511, 676, 9, 4) + box(805, 551, 2, 34), '#7d480c');
let io = '';
for (const [p, q] of [[196, 235], [241, 345], [350, 455], [461, 566], [569, 676]]) {
  io += box(1136.500, p + .5, 7, q - p);
  io += box(1145.500, p + .5, 4, q - p);
  for (let y = p + 8; y < Math.min(q, p + 46); y += 10) io += `M1136.500 ${y + .5}h7m0 1h-7`;
  for (let y = p + 26; y < q; y += 26) io += `M1145.500 ${y + .5}h4`;
}
for (const y of [624, 634, 644, 653, 663, 673]) io += `M1136.500 ${y + .5}h7M527.500 ${y + .5}h7m0 1h-7`;
io += box(520.500, 573.500, 5, 50) + box(520.500, 625.500, 5, 50) + box(527.500, 569.500, 7, 106) + 'M520.500 598.500h5M520.500 650.500h5';
add(io, null, '#b07c28');
add('M1136 237.500h7m0 2h-7M1136 457.500h7m0 2h-7M1136 677.500h7m0 2h-7M527 677.500h7m0 2h-7', null, '#7d480c');
```
